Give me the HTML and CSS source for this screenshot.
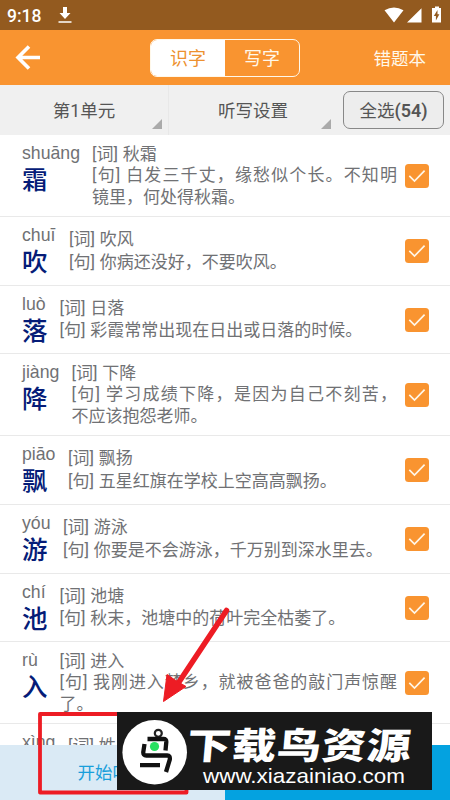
FILE: index.html
```html
<!DOCTYPE html>
<html lang="zh-CN">
<head>
<meta charset="utf-8">
<title>识字</title>
<link rel="stylesheet" href="styles.css">
</head>
<body>
<svg class="defs" width="0" height="0"><symbol id="check" viewBox="0 0 24 24"><rect width="24" height="24" rx="3.5" fill="#f99430"/><path d="M4.3 11.8 9.5 17 19.6 6.7" fill="none" stroke="#fff6e8" stroke-width="1.7"/></symbol></svg>
<div class="app">
  <div class="status">
    <span class="time">9:18</span>
    <svg class="dl" width="14" height="18" viewBox="0 0 14 18"><path d="M5 1h4v6h3.5L7 13 1.5 7H5zM.5 15.2h13v1.6H.5z" fill="#fff"/></svg>
    <svg class="sys" width="58" height="18" viewBox="0 0 58 18"><path d="M.5 4.3Q10 -1.5 19.5 4.3L10 16.5zM23 16.5 37.5 2.3v14.2zM49 2h2V.5h4V2h2v14.5h-9V2z" fill="#fff"/><path d="m53.5 4-3.7 6h2.1v4.5l3.5-6.2h-1.9z" fill="#935a1f"/></svg>
  </div>
  <header class="bar">
    <svg class="back" width="26" height="26" viewBox="0 0 26 26"><path d="M25 12.5H3M14 1.5 3 12.5 14 23.5" fill="none" stroke="#fff" stroke-width="3.6"/></svg>
    <div class="seg"><span class="on">识字</span><span>写字</span></div>
    <span class="wrong">错题本</span>
  </header>
  <nav class="filters">
    <div class="drop first">第1单元</div>
    <div class="drop">听写设置</div>
    <div class="all">全选<b>(54)</b></div>
  </nav>
  <main class="list">
    <div class="row tall c1"><div class="hz"><span class="py">shuāng</span><b>霜</b></div><div class="txt"><p>[词] 秋霜</p><p class="full">[句] 白发三千丈，缘愁似个长。不知明</p><p>镜里，何处得秋霜。</p></div><svg class="ck"><use href="#check"/></svg></div>
    <div class="row c2"><div class="hz"><span class="py">chuī</span><b>吹</b></div><div class="txt"><p>[词] 吹风</p><p>[句] 你病还没好，不要吹风。</p></div><svg class="ck"><use href="#check"/></svg></div>
    <div class="row c3"><div class="hz"><span class="py">luò</span><b>落</b></div><div class="txt"><p>[词] 日落</p><p>[句] 彩霞常常出现在日出或日落的时候。</p></div><svg class="ck"><use href="#check"/></svg></div>
    <div class="row tall c4"><div class="hz"><span class="py">jiàng</span><b>降</b></div><div class="txt"><p>[词] 下降</p><p class="full">[句] 学习成绩下降，是因为自己不刻苦，</p><p>不应该抱怨老师。</p></div><svg class="ck"><use href="#check"/></svg></div>
    <div class="row c5"><div class="hz"><span class="py">piāo</span><b>飘</b></div><div class="txt"><p>[词] 飘扬</p><p>[句] 五星红旗在学校上空高高飘扬。</p></div><svg class="ck"><use href="#check"/></svg></div>
    <div class="row c6"><div class="hz"><span class="py">yóu</span><b>游</b></div><div class="txt"><p>[词] 游泳</p><p>[句] 你要是不会游泳，千万别到深水里去。</p></div><svg class="ck"><use href="#check"/></svg></div>
    <div class="row c3"><div class="hz"><span class="py">chí</span><b>池</b></div><div class="txt"><p>[词] 池塘</p><p>[句] 秋末，池塘中的荷叶完全枯萎了。</p></div><svg class="ck"><use href="#check"/></svg></div>
    <div class="row tall c3"><div class="hz"><span class="py">rù</span><b>入</b></div><div class="txt"><p>[词] 进入</p><p class="full">[句] 我刚进入梦乡，就被爸爸的敲门声惊醒</p><p>了。</p></div><svg class="ck"><use href="#check"/></svg></div>
    <div class="row c5"><div class="hz"><span class="py">xìng</span></div><div class="txt"><p>[词] 姓</p></div></div>
  </main>
  <footer class="foot"><div class="start">开始听写</div><div class="blue"></div></footer>
  <svg class="overlay" width="450" height="800" viewBox="0 0 450 800">
    <rect x="40" y="714" width="146.500" height="78.500" fill="none" stroke="#ed1c24" stroke-width="3.8" stroke-linejoin="round"/>
    <path d="M226.500 610.500 179 682" stroke="#ed1c24" stroke-width="5.500" stroke-linecap="round"/>
    <path d="M163.500 701.500 167 674.500 175 680 186 686.500z" fill="#ed1c24" stroke="#ed1c24" stroke-linejoin="round"/>
    <rect x="117" y="712" width="315" height="78" fill="#191919"/>
    <circle cx="154.700" cy="752.200" r="32.300" fill="#fff"/>
    <circle cx="158.300" cy="733.300" r="3.500" fill="none" stroke="#222" stroke-width="2.200"/>
    <path d="M147.500 739h16q3 0 2.800 3l-.8 8.500M144.500 744l-1.200 8q-.3 3.500 3 3.500h21q3 0 2.500 4l-3.800 12.500M140 765.200h20" fill="none" stroke="#111" stroke-width="4.300"/>
    <circle cx="154.500" cy="746.500" r="4.600" fill="#28e061"/>
    <text class="brand" transform="translate(186 758.500) skewX(-5) scale(1.16 .96)" textLength="193">下载鸟资源</text>
    <text class="url" x="203" y="783" textLength="202" lengthAdjust="spacingAndGlyphs">www.xiazainiao.com</text>
  </svg>
</div>
</body>
</html>
```

FILE: styles.css
```css
* { box-sizing: border-box; }
body { margin: 0; font-family: Roboto, "Noto Sans CJK SC", sans-serif; }
p { margin: 0; }
.defs { position: absolute; }
.app { position: relative; width: 450px; height: 800px; overflow: hidden; display: flex; flex-direction: column; background: #fff; }
.status { height: 30px; flex: none; background: #935a1f; color: #fff; display: flex; align-items: center; padding: 0 8px 0 7px; }
.time { font-size: 17.5px; font-weight: 500; width: 51px; line-height: 30px; padding-top: 1px; }
.sys { margin-left: auto; }
.bar { height: 55px; flex: none; background: #f99430; display: grid; grid-template-columns: 150px 150px 1fr; align-items: center; color: #fff8ea; font-size: 17.5px; }
.back { margin-left: 15px; }
.seg { display: flex; height: 38px; border: 1.5px solid #fff8ea; border-radius: 7px; overflow: hidden; }
.seg span { flex: 1; text-align: center; line-height: 37px; font-size: 18px; }
.seg .on { background: #fff; color: #ed912f; }
.wrong { text-align: right; padding-right: 24px; }
.filters { height: 50px; flex: none; display: flex; background: #f0f0f0; color: #555; font-size: 17.5px; }
.drop { width: 168px; text-align: center; line-height: 52px; position: relative; }
.first { border-right: 1px solid #e8e8e8; width: 169px; }
.drop::after { content: ""; position: absolute; right: 6px; bottom: 6px; border-left: 10px solid transparent; border-bottom: 10px solid #aaa; }
.all { width: 101px; height: 38px; margin: 6px 0 0 6px; border: 1.3px solid #888; border-radius: 7px; background: #ededed; text-align: center; line-height: 38px; }
.all b { font-weight: 600; font-size: 18px; }
.list { flex: none; height: 609.5px; overflow: hidden; }
.row { height: 68.7px; border-bottom: 1.5px solid #e9e9e9; padding-left: 22px; display: grid; grid-template-columns: var(--c) 1fr 45px; color: #707174; }
.tall { height: 82px; }
.c1 { --c: 70px; } .c2 { --c: 47px; } .c3 { --c: 37.5px; } .c4 { --c: 49.500px; } .c5 { --c: 46px; } .c6 { --c: 41px; }
.hz { display: flex; flex-direction: column; white-space: nowrap; }
.py { font-family: "Liberation Sans", sans-serif; font-size: 17.7px; height: 29px; line-height: 36px; }
.hz b { color: #051c78; font-size: 25.5px; line-height: 33px; font-weight: 500; }
.txt { font-size: 17px; word-spacing: .5px; line-height: 22.5px; padding-top: 11px; white-space: nowrap; }
.tall .txt { line-height: 21.500px; padding-top: 8.5px; }
.full { text-align: justify; text-align-last: justify; margin-right: 8px; }
.ck { width: 24px; height: 24px; align-self: center; }
.foot { flex: 1; display: grid; grid-template-columns: 1fr 1fr; }
.start { background: #daeaf5; color: #199fdb; font-size: 17.5px; text-align: center; line-height: 57px; }
.blue { background: #04a2e0; }
.overlay { position: absolute; left: 0; top: 0; }
.brand { font-family: "Noto Sans CJK SC", sans-serif; font-weight: 900; font-size: 38px; fill: #fff; }
.url { font-family: "Liberation Sans", sans-serif; font-size: 21px; fill: #fff; }
```
